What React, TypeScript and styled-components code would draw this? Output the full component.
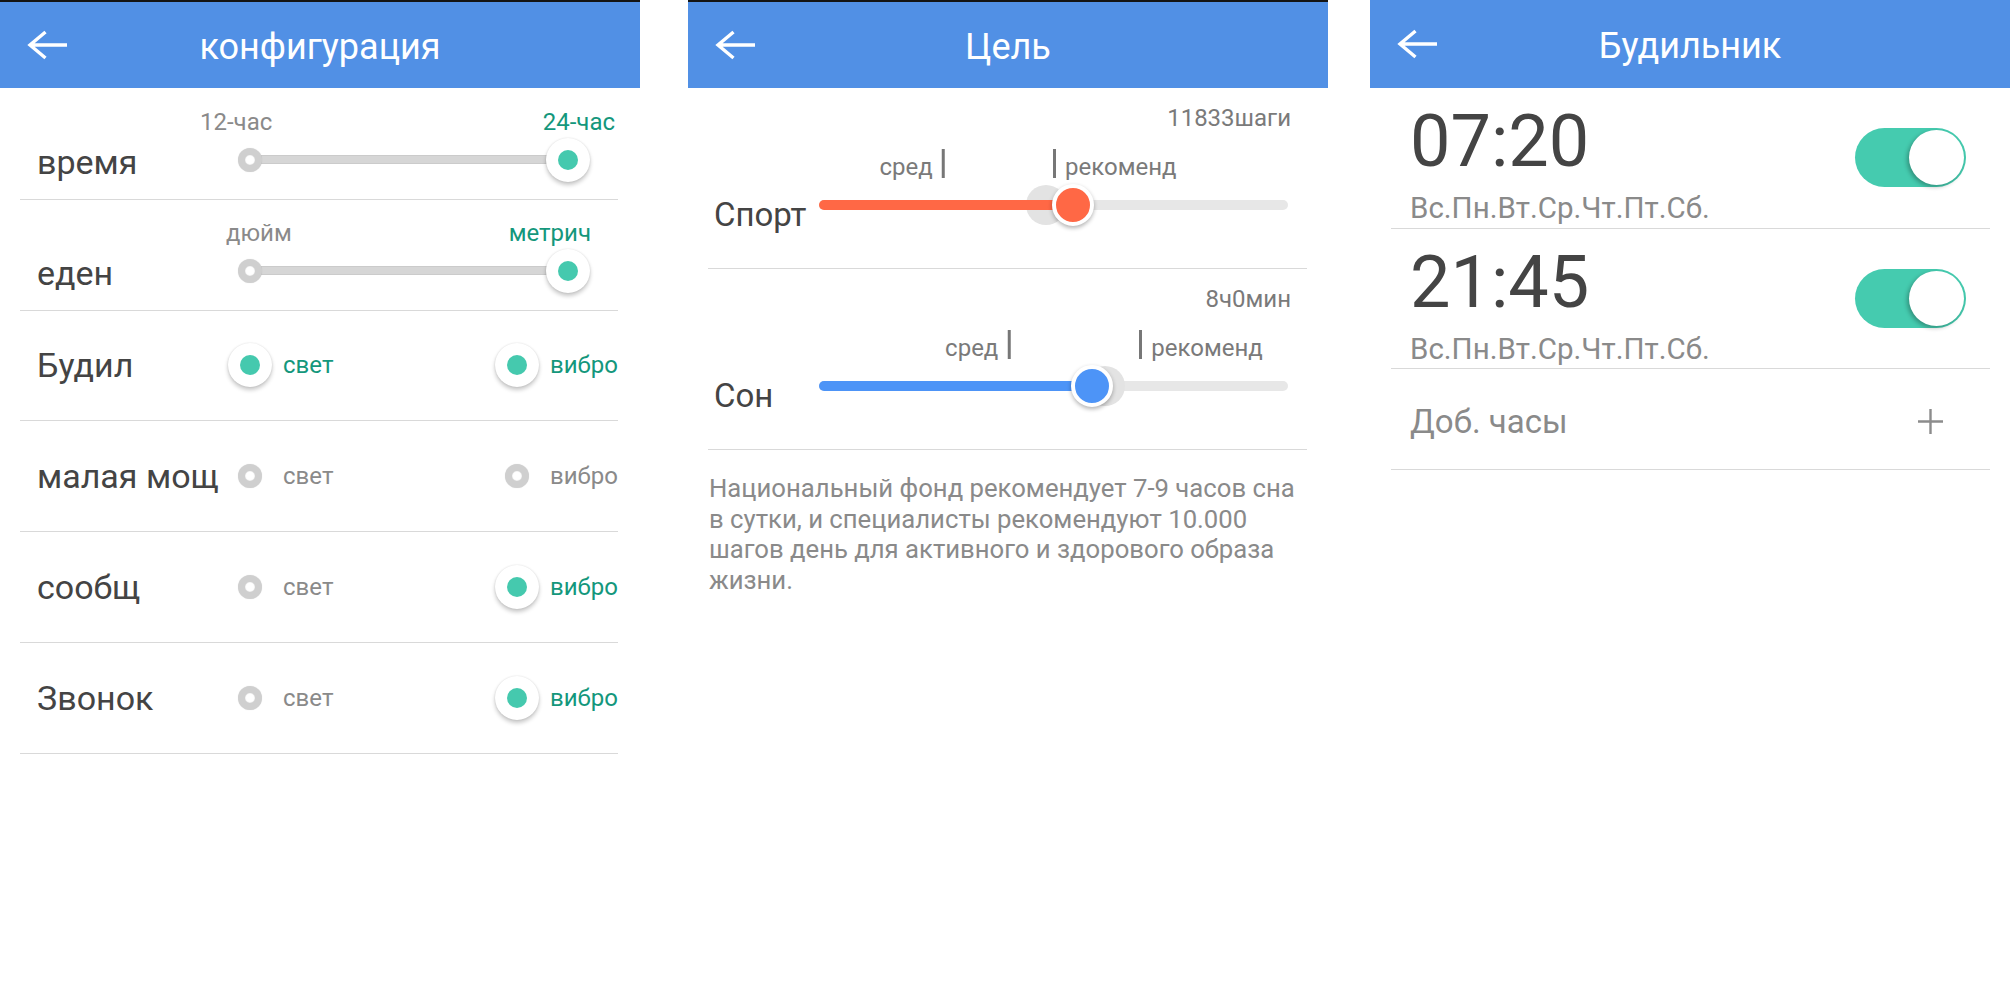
import React from "react";
import styled, { createGlobalStyle } from "styled-components";

const GlobalStyle = createGlobalStyle`
  html, body {
    margin: 0;
    padding: 0;
    background: #ffffff;
  }
  body {
    font-family: Roboto, "Noto Sans", "Liberation Sans", sans-serif;
    -webkit-font-smoothing: antialiased;
  }
`;

const GREEN_TEXT = "#14977c";
const GREEN = "#45c9ae";
const GREY_TEXT = "#8a8a8a";
const DARK_TEXT = "#444444";
const LINE = "#d9d9d9";

const Page = styled.div`
  display: flex;
  width: 2010px;
  height: 998px;
  background: #ffffff;
  overflow: hidden;
`;

const Screen = styled.section<{ $offset: number }>`
  flex: none;
  width: 640px;
  margin-left: ${({ $offset }) => $offset}px;
`;

const Header = styled.header<{ $line?: boolean }>`
  box-sizing: border-box;
  height: 88px;
  display: grid;
  grid-template-columns: 1fr auto 1fr;
  align-items: center;
  background: #5190e5;
  border-top: ${({ $line }) => ($line ? "2px solid #141414" : "none")};
`;

const BackButton = styled.button`
  justify-self: start;
  margin-left: 27px;
  padding: 0;
  width: 40px;
  height: 30px;
  border: none;
  background: none;
  display: flex;
`;

const Title = styled.h1`
  margin: 0;
  padding-top: 4px;
  font-size: 36px;
  line-height: 42px;
  font-weight: 400;
  color: #ffffff;
`;

/* ---------- конфигурация ---------- */

const ConfigList = styled.div`
  margin: 0 22px 0 20px;
  padding-top: 1px;
`;

const SliderRow = styled.div`
  box-sizing: border-box;
  height: 110.8px;
  display: flex;
  align-items: flex-end;
  padding: 0 0 17px 17px;
  border-bottom: 1px solid ${LINE};
`;

const RadioRow = styled.div`
  box-sizing: border-box;
  height: 110.8px;
  display: flex;
  align-items: center;
  padding-left: 17px;
  border-bottom: 1px solid ${LINE};
`;

const RowLabel = styled.div<{ $w: number }>`
  flex: none;
  width: ${({ $w }) => $w}px;
  font-size: 34px;
  line-height: 40px;
  color: ${DARK_TEXT};
  white-space: nowrap;
`;

const SliderCol = styled.div`
  width: 423px;
  display: flex;
  flex-direction: column;
`;

const TickLabels = styled.div<{ $l: number; $r: number }>`
  display: flex;
  justify-content: space-between;
  padding: 0 ${({ $r }) => $r}px 0 ${({ $l }) => $l}px;
`;

const SmallText = styled.span<{ $on?: boolean }>`
  font-size: 24px;
  line-height: 28px;
  color: ${({ $on }) => ($on ? GREEN_TEXT : GREY_TEXT)};
`;

const SwitchTrack = styled.div`
  display: flex;
  align-items: center;
  width: 362px;
  height: 44px;
  margin: 2px 0 0 33px;
`;

const KnobSlot = styled.div`
  flex: none;
  width: 44px;
  height: 44px;
  display: flex;
  align-items: center;
  justify-content: center;
  position: relative;
  z-index: 1;
`;

const TrackLine = styled.div`
  flex: 1;
  box-sizing: border-box;
  height: 9px;
  margin: 0 -22px;
  background: #d6d6d6;
  border: 1px solid #cbcbcb;
`;

const Ring = styled.div`
  box-sizing: border-box;
  width: 24px;
  height: 24px;
  border-radius: 50%;
  background: #ffffff;
  border: 7px solid #cfcfcf;
  box-shadow: inset 0 0 1px rgba(0, 0, 0, 0.25), 0 0 1px rgba(0, 0, 0, 0.15);
`;

const DotKnob = styled.div`
  width: 44px;
  height: 44px;
  border-radius: 50%;
  background: #ffffff;
  display: flex;
  align-items: center;
  justify-content: center;
  box-shadow: 0 3px 4px rgba(0, 0, 0, 0.22), 0 0 2px rgba(0, 0, 0, 0.12);

  &::after {
    content: "";
    width: 20px;
    height: 20px;
    border-radius: 50%;
    background: ${GREEN};
  }
`;

const Option = styled.div<{ $w?: number }>`
  display: flex;
  align-items: center;
  gap: 11px;
  ${({ $w }) => ($w ? `width: ${$w}px; flex: none;` : "flex: 1;")}
`;

/* ---------- Цель ---------- */

const GoalList = styled.div`
  margin: 0 21px 0 20px;
`;

const GoalRow = styled.div`
  box-sizing: border-box;
  height: 181px;
  padding: 16px 16px 0 6px;
  border-bottom: 1px solid ${LINE};
`;

const ValueText = styled.div`
  text-align: right;
  font-size: 24px;
  line-height: 28px;
  color: #7a7a7a;
`;

const GoalBody = styled.div`
  display: grid;
  grid-template-columns: 105px 1fr;
  grid-template-rows: 48px 50px;
  margin-right: 3px;
`;

const GoalLabel = styled.div`
  grid-column: 1;
  grid-row: 2;
  padding-top: 15px;
  font-size: 33px;
  line-height: 40px;
  color: ${DARK_TEXT};
`;

const Marks = styled.div`
  grid-column: 2;
  grid-row: 1;
  position: relative;
`;

const Mark = styled.div<{ $before?: boolean }>`
  position: absolute;
  bottom: -1px;
  display: flex;
  align-items: flex-end;
  gap: 9px;
  transform: ${({ $before }) => ($before ? "translateX(-100%)" : "none")};
`;

const MarkBar = styled.span`
  width: 3px;
  height: 29px;
  margin-bottom: 3px;
  background: #777777;
`;

const MarkText = styled.span`
  font-size: 24px;
  line-height: 28px;
  color: #7a7a7a;
  white-space: nowrap;
`;

const GoalTrack = styled.div`
  grid-column: 2;
  grid-row: 2;
  position: relative;
  display: flex;
  align-items: center;
`;

const GoalLine = styled.div`
  width: 100%;
  height: 10px;
  border-radius: 5px;
  background: #e7e7e7;
`;

const GoalFill = styled.div<{ $color: string }>`
  position: absolute;
  left: 0;
  top: 20px;
  height: 10px;
  border-radius: 5px 0 0 5px;
  background: ${({ $color }) => $color};
`;

const Halo = styled.div`
  position: absolute;
  top: 5px;
  width: 40px;
  height: 40px;
  border-radius: 50%;
  background: #e3e3e3;
  transform: translateX(-50%);
`;

const GoalKnob = styled.div<{ $color: string }>`
  position: absolute;
  top: 4px;
  box-sizing: border-box;
  width: 42px;
  height: 42px;
  border-radius: 50%;
  background: ${({ $color }) => $color};
  border: 4px solid #ffffff;
  box-shadow: 0 2px 4px rgba(0, 0, 0, 0.3);
  transform: translateX(-50%);
`;

const Note = styled.p`
  margin: 23px 21px 0 21px;
  max-width: 592px;
  font-size: 25.7px;
  line-height: 30.5px;
  color: ${GREY_TEXT};
`;

/* ---------- Будильник ---------- */

const AlarmList = styled.div`
  margin: 0 20px 0 21px;
`;

const AlarmRow = styled.div`
  box-sizing: border-box;
  height: 140.5px;
  display: flex;
  justify-content: space-between;
  align-items: flex-start;
  padding: 18px 24px 0 19px;
  border-bottom: 1px solid ${LINE};
`;

const AlarmTime = styled.div`
  font-size: 72px;
  line-height: 72px;
  color: ${DARK_TEXT};
`;

const AlarmDays = styled.div`
  margin-top: 13px;
  font-size: 29.5px;
  line-height: 34px;
  color: ${GREY_TEXT};
`;

const Toggle = styled.div`
  box-sizing: border-box;
  margin-top: 22px;
  width: 111px;
  height: 59px;
  padding: 2px;
  border-radius: 30px;
  background: #45cbaf;
  display: flex;
  justify-content: flex-end;

  &::after {
    content: "";
    width: 55px;
    height: 55px;
    border-radius: 50%;
    background: #ffffff;
    box-shadow: -2px 2px 4px rgba(0, 0, 0, 0.28);
  }
`;

const AddRow = styled.div`
  box-sizing: border-box;
  height: 101px;
  display: flex;
  align-items: center;
  justify-content: space-between;
  padding: 5px 47px 0 19px;
  border-bottom: 1px solid ${LINE};
`;

const AddText = styled.span`
  font-size: 33px;
  line-height: 38px;
  color: ${GREY_TEXT};
`;

const BackArrow = () => (
  <svg width="40" height="30" viewBox="0 0 40 30" fill="none">
    <path
      d="M40 15H3M18.5 2L3 15l15.5 13"
      stroke="#ffffff"
      strokeWidth="3.4"
      strokeLinejoin="miter"
    />
  </svg>
);

const PlusIcon = () => (
  <svg width="25" height="25" viewBox="0 0 25 25" fill="none">
    <path d="M12.5 0v25M0 12.5h25" stroke="#8c8c8c" strokeWidth="2.4" />
  </svg>
);

type Choice = { label: string; light: boolean; vibro: boolean };

const choices: Choice[] = [
  { label: "Будил", light: true, vibro: true },
  { label: "малая мощ", light: false, vibro: false },
  { label: "сообщ", light: false, vibro: true },
  { label: "Звонок", light: false, vibro: true },
];

type Goal = {
  label: string;
  value: string;
  avg: number;
  rec: number;
  pos: number;
  halo: number;
  color: string;
};

const goals: Goal[] = [
  { label: "Спорт", value: "11833шаги", avg: 26.8, rec: 49.9, pos: 54.2, halo: 48.4, color: "#ff6845" },
  { label: "Сон", value: "8ч0мин", avg: 40.8, rec: 68.3, pos: 58.3, halo: 61, color: "#4d94f7" },
];

const alarms = [
  { time: "07:20", days: "Вс.Пн.Вт.Ср.Чт.Пт.Сб." },
  { time: "21:45", days: "Вс.Пн.Вт.Ср.Чт.Пт.Сб." },
];

const Radio = ({ on }: { on: boolean }) => (
  <KnobSlot>{on ? <DotKnob /> : <Ring />}</KnobSlot>
);

const App: React.FC = () => {
  return (
    <Page>
      <GlobalStyle />

      <Screen $offset={0}>
        <Header $line>
          <BackButton>
            <BackArrow />
          </BackButton>
          <Title>конфигурация</Title>
        </Header>
        <ConfigList>
          <SliderRow>
            <RowLabel $w={158}>время</RowLabel>
            <SliderCol>
              <TickLabels $l={5} $r={3}>
                <SmallText>12-час</SmallText>
                <SmallText $on>24-час</SmallText>
              </TickLabels>
              <SwitchTrack>
                <KnobSlot>
                  <Ring />
                </KnobSlot>
                <TrackLine />
                <KnobSlot>
                  <DotKnob />
                </KnobSlot>
              </SwitchTrack>
            </SliderCol>
          </SliderRow>
          <SliderRow>
            <RowLabel $w={158}>еден</RowLabel>
            <SliderCol>
              <TickLabels $l={31} $r={27}>
                <SmallText>дюйм</SmallText>
                <SmallText $on>метрич</SmallText>
              </TickLabels>
              <SwitchTrack>
                <KnobSlot>
                  <Ring />
                </KnobSlot>
                <TrackLine />
                <KnobSlot>
                  <DotKnob />
                </KnobSlot>
              </SwitchTrack>
            </SliderCol>
          </SliderRow>
          {choices.map((c) => (
            <RadioRow key={c.label}>
              <RowLabel $w={191}>{c.label}</RowLabel>
              <Option $w={267}>
                <Radio on={c.light} />
                <SmallText $on={c.light}>свет</SmallText>
              </Option>
              <Option>
                <Radio on={c.vibro} />
                <SmallText $on={c.vibro}>вибро</SmallText>
              </Option>
            </RadioRow>
          ))}
        </ConfigList>
      </Screen>

      <Screen $offset={48}>
        <Header $line>
          <BackButton>
            <BackArrow />
          </BackButton>
          <Title>Цель</Title>
        </Header>
        <GoalList>
          {goals.map((g) => (
            <GoalRow key={g.label}>
              <ValueText>{g.value}</ValueText>
              <GoalBody>
                <Marks>
                  <Mark $before style={{ left: `${g.avg}%` }}>
                    <MarkText>сред</MarkText>
                    <MarkBar />
                  </Mark>
                  <Mark style={{ left: `${g.rec}%` }}>
                    <MarkBar />
                    <MarkText>рекоменд</MarkText>
                  </Mark>
                </Marks>
                <GoalLabel>{g.label}</GoalLabel>
                <GoalTrack>
                  <GoalLine />
                  <Halo style={{ left: `${g.halo}%` }} />
                  <GoalFill $color={g.color} style={{ width: `${g.pos}%` }} />
                  <GoalKnob $color={g.color} style={{ left: `${g.pos}%` }} />
                </GoalTrack>
              </GoalBody>
            </GoalRow>
          ))}
        </GoalList>
        <Note>
          Национальный фонд рекомендует 7-9 часов сна в сутки, и специалисты
          рекомендуют 10.000 шагов день для активного и здорового образа жизни.
        </Note>
      </Screen>

      <Screen $offset={42}>
        <Header>
          <BackButton>
            <BackArrow />
          </BackButton>
          <Title>Будильник</Title>
        </Header>
        <AlarmList>
          {alarms.map((a) => (
            <AlarmRow key={a.time}>
              <div>
                <AlarmTime>{a.time}</AlarmTime>
                <AlarmDays>{a.days}</AlarmDays>
              </div>
              <Toggle />
            </AlarmRow>
          ))}
          <AddRow>
            <AddText>Доб. часы</AddText>
            <PlusIcon />
          </AddRow>
        </AlarmList>
      </Screen>
    </Page>
  );
};

export default App;
